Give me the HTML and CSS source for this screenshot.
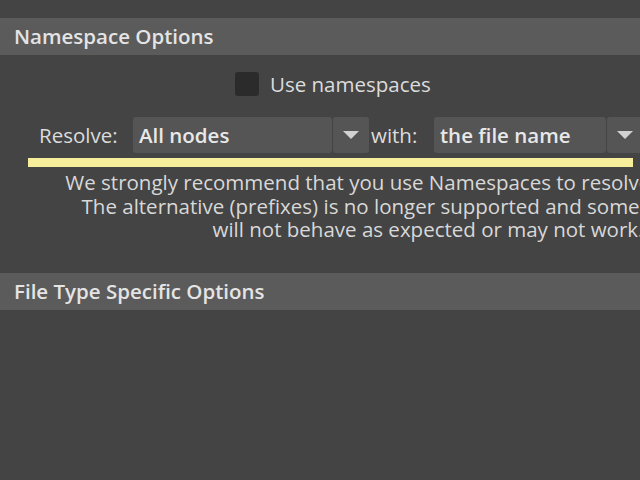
FILE: index.html
```html
<!DOCTYPE html>
<html lang="en">
<head>
  <meta charset="UTF-8">
  <title>Import Options</title>
  <link rel="stylesheet" href="styles.css">
</head>
<body>
  <div class="options">
    <div class="section-header">Namespace Options</div>

    <div class="ns-body">
      <label class="check-row">
        <span class="checkbox"></span>
        <span>Use namespaces</span>
      </label>

      <div class="resolve-row">
        <span class="field-label">Resolve:</span>
        <div class="dropdown nodes">
          <span class="dropdown-value">All nodes</span>
          <span class="dropdown-arrow"></span>
        </div>
        <span class="field-label with">with:</span>
        <div class="dropdown filename">
          <span class="dropdown-value">the file name</span>
          <span class="dropdown-arrow"></span>
        </div>
      </div>

      <div class="highlight"></div>

      <p class="note">
        We strongly recommend that you use Namespaces to resolve name clashes.<br>
        The alternative (prefixes) is no longer supported and some of these tools<br>
        will not behave as expected or may not work.
      </p>
    </div>

    <div class="section-header">File Type Specific Options</div>
  </div>
</body>
</html>
```

FILE: styles.css
```css
html, body {
  margin: 0;
  background: #444444;
  overflow: hidden;
}
body {
  font-family: "Open Sans", sans-serif;
  color: #dcdcdc;
  width: 640px;
  height: 480px;
}
.options {
  width: 900px;
  padding-top: 18px;
}
.section-header {
  height: 37px;
  line-height: 37px;
  background: #5b5b5b;
  padding-left: 14px;
  font-size: 20.5px;
  font-weight: 600;
  color: #e4e4e4;
}
.ns-body {
  padding: 17px 0 31px;
}
.check-row {
  display: flex;
  align-items: center;
  gap: 11px;
  height: 24px;
  margin-left: 235px;
  font-size: 20.5px;
  line-height: 24px;
}
.checkbox {
  width: 24px;
  height: 24px;
  background: #2b2b2b;
  border-radius: 3px;
}
.resolve-row {
  display: flex;
  align-items: center;
  height: 36px;
  margin-top: 21px;
  padding-left: 39px;
  font-size: 20.5px;
}
.field-label {
  width: 94px;
}
.field-label.with {
  width: 63px;
  padding-left: 2px;
}
.dropdown {
  display: flex;
  height: 36px;
  gap: 1px;
}
.dropdown-value {
  background: #555555;
  border-radius: 3px;
  padding-left: 6px;
  line-height: 36px;
  font-weight: 600;
  color: #e8e8e8;
}
.nodes .dropdown-value {
  width: 193px;
}
.filename .dropdown-value {
  width: 166px;
}
.dropdown-arrow {
  width: 36px;
  background: #555555;
  border-radius: 3px;
  position: relative;
}
.dropdown-arrow::after {
  content: "";
  position: absolute;
  left: 10px;
  top: 14px;
  border-left: 8px solid transparent;
  border-right: 8px solid transparent;
  border-top: 8px solid #d2d2d2;
}
.highlight {
  margin: 5px 0 0 28px;
  width: 605px;
  height: 9px;
  background: #f7ee9c;
}
.note {
  margin: 4px 0 0;
  width: 856px;
  text-align: center;
  font-size: 20.5px;
  line-height: 23.5px;
  color: #d8d8d8;
}
```
